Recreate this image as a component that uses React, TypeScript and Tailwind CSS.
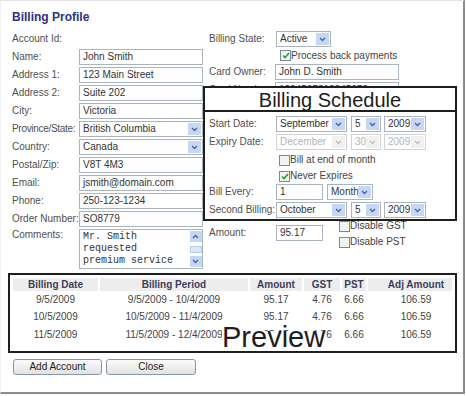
import React from "react";

const LBL = "text-[10px] leading-[12px] text-[#505050] whitespace-nowrap";

function Chevron({ up, disabled }: { up?: boolean; disabled?: boolean }) {
  return (
    <svg width="7" height="5" viewBox="0 0 7 5">
      <path
        d={up ? "M1 4 L3.5 1.5 L6 4" : "M1 1 L3.5 3.5 L6 1"}
        stroke={disabled ? "#bdbdbd" : "#4a64a0"}
        strokeWidth="1.4"
        fill="none"
      />
    </svg>
  );
}

function TextBox({ value, className }: { value: string; className: string }) {
  return (
    <div
      className={`flex h-[16px] items-center border border-[#aab4be] bg-white pl-[3px] text-[10px] leading-[12px] text-[#333] whitespace-nowrap overflow-hidden ${className}`}
    >
      {value}
    </div>
  );
}

function Select({
  value,
  className,
  disabled,
}: {
  value: string;
  className: string;
  disabled?: boolean;
}) {
  return (
    <div
      className={`flex h-[16px] items-center border bg-white pl-[3px] pr-[1px] text-[10px] leading-[12px] ${
        disabled ? "border-[#cfd3d8] text-[#b4b4b4]" : "border-[#aab4be] text-[#333]"
      } ${className}`}
    >
      <span className="flex-1 whitespace-nowrap overflow-hidden">{value}</span>
      <span
        className={`flex h-[12px] w-[13px] items-center justify-center ${
          disabled ? "bg-[#f1f1f1]" : "bg-[#c6d6f6]"
        }`}
      >
        <Chevron disabled={disabled} />
      </span>
    </div>
  );
}

function Check({ checked }: { checked?: boolean }) {
  return (
    <span className="flex h-[11px] w-[11px] shrink-0 items-center justify-center border border-[#7b8a99] bg-[#f1f3f5]">
      {checked && (
        <svg width="8" height="7" viewBox="0 0 8 7">
          <path d="M1 3.5 L3 5.5 L7 1" stroke="#21a121" strokeWidth="1.6" fill="none" />
        </svg>
      )}
    </span>
  );
}

function CheckRow({ label, checked }: { label: string; checked?: boolean }) {
  return (
    <div className="flex items-center">
      <Check checked={checked} />
      <span className="text-[10px] leading-[12px] text-[#444]">{label}</span>
    </div>
  );
}

function LeftRow({
  label,
  children,
  tight,
}: {
  label: string;
  children?: React.ReactNode;
  tight?: boolean;
}) {
  return (
    <div className="flex h-[16px] items-center">
      <span className={`${LBL} w-[67px] ${tight ? "tracking-[-0.3px]" : ""}`}>{label}</span>
      {children}
    </div>
  );
}

function RightRow({ label, children }: { label: string; children?: React.ReactNode }) {
  return (
    <div className="flex h-[16px] items-center">
      <span className={`${LBL} w-[67px]`}>{label}</span>
      {children}
    </div>
  );
}

const rows = [
  ["9/5/2009", "9/5/2009 - 10/4/2009", "95.17", "4.76", "6.66", "106.59"],
  ["10/5/2009", "10/5/2009 - 11/4/2009", "95.17", "4.76", "6.66", "106.59"],
  ["11/5/2009", "11/5/2009 - 12/4/2009", "95.17", "4.76", "6.66", "106.59"],
];

export default function App() {
  return (
    <div className="h-[396px] w-[466px] bg-white font-['Liberation_Sans',Arial,sans-serif]">
      <div className="flex h-[394px] w-[465px] flex-col border-t border-l border-r-2 border-b-2 border-t-[#e2e2e2] border-l-[#f0f0f0] border-r-[#8c8c8c] border-b-[#8c8c8c] pl-[11px] pt-[9px]">
        <div className="text-[12px] font-bold leading-[14px] text-[#2d3184]">Billing Profile</div>

        <div className="mt-[7px] flex">
          {/* Left column */}
          <div className="flex w-[191px] flex-col gap-[2px]">
            <LeftRow label="Account Id:" />
            <LeftRow label="Name:">
              <TextBox value="John Smith" className="w-[124px]" />
            </LeftRow>
            <LeftRow label="Address 1:">
              <TextBox value="123 Main Street" className="w-[124px]" />
            </LeftRow>
            <LeftRow label="Address 2:">
              <TextBox value="Suite 202" className="w-[124px]" />
            </LeftRow>
            <LeftRow label="City:">
              <TextBox value="Victoria" className="w-[124px]" />
            </LeftRow>
            <LeftRow label="Province/State:" tight>
              <Select value="British Columbia" className="w-[124px]" />
            </LeftRow>
            <LeftRow label="Country:">
              <Select value="Canada" className="w-[124px]" />
            </LeftRow>
            <LeftRow label="Postal/Zip:">
              <TextBox value="V8T 4M3" className="w-[124px]" />
            </LeftRow>
            <LeftRow label="Email:">
              <TextBox value="jsmith@domain.com" className="w-[124px]" />
            </LeftRow>
            <LeftRow label="Phone:">
              <TextBox value="250-123-1234" className="w-[124px]" />
            </LeftRow>
            <LeftRow label="Order Number:">
              <TextBox value="SO8779" className="w-[124px]" />
            </LeftRow>
            <div className="flex items-start">
              <span className={`${LBL} w-[67px]`}>Comments:</span>
              <div className="flex h-[40px] w-[124px] border border-[#aab4be] bg-white">
                <div className="flex-1 pl-[3px] pt-[1px] font-['Liberation_Mono','Courier_New',monospace] text-[10px] leading-[12px] text-[#333]">
                  <div>Mr. Smith</div>
                  <div>requested</div>
                  <div>premium service</div>
                </div>
                <div className="flex w-[13px] flex-col items-center justify-between py-[1px]">
                  <span className="flex h-[11px] w-[12px] items-center justify-center bg-[#c6d6f6]">
                    <Chevron up />
                  </span>
                  <span className="h-[7px] w-[12px] border border-[#b7c9ee] bg-[#dce7fb]" />
                  <span className="flex h-[11px] w-[12px] items-center justify-center bg-[#c6d6f6]">
                    <Chevron />
                  </span>
                </div>
              </div>
            </div>
          </div>

          {/* Right column */}
          <div className="flex w-[254px] flex-col">
            <div className="flex flex-col gap-[2px] pl-[6px]">
              <RightRow label="Billing State:">
                <Select value="Active" className="w-[55px]" />
              </RightRow>
              <div className="flex h-[13px] items-center pl-[71px]">
                <CheckRow label="Process back payments" checked />
              </div>
              <RightRow label="Card Owner:">
                <TextBox value="John D. Smith" className="-ml-[1px] w-[124px]" />
              </RightRow>
              <RightRow label="Card Number:">
                <TextBox value="1234567812345678" className="-ml-[1px] w-[124px]" />
              </RightRow>
            </div>

            {/* Billing schedule */}
            <div className="relative z-10 -mt-[12px] bg-white">
              <div className="flex h-[26px] items-center justify-center border-2 border-[#1e1e1e] pt-[1px] text-[20px] leading-[22px] text-[#1e1e1e]">
                Billing Schedule
              </div>
              <div className="flex flex-col border-x-2 border-b-2 border-[#1e1e1e] pb-[1px] pl-[4px] pt-[4px]">
                <RightRow label="Start Date:">
                  <Select value="September" className="w-[71px]" />
                  <Select value="5" className="ml-[4px] w-[30px]" />
                  <Select value="2009" className="ml-[3px] w-[42px]" />
                </RightRow>
                <div className="mt-[2px]">
                  <RightRow label="Expiry Date:">
                    <Select value="December" className="w-[71px]" disabled />
                    <Select value="30" className="ml-[4px] w-[30px]" disabled />
                    <Select value="2009" className="ml-[3px] w-[42px]" disabled />
                  </RightRow>
                </div>
                <div className="mt-[2px] flex h-[16px] items-center pl-[70px]">
                  <CheckRow label="Bill at end of month" />
                </div>
                <div className="flex h-[16px] items-center pl-[70px]">
                  <CheckRow label="Never Expires" checked />
                </div>
                <RightRow label="Bill Every:">
                  <TextBox value="1" className="w-[47px]" />
                  <Select value="Month" className="ml-[4px] w-[46px]" />
                </RightRow>
                <div className="mt-[2px]">
                  <RightRow label="Second Billing:">
                    <Select value="October" className="w-[71px]" />
                    <Select value="5" className="ml-[4px] w-[30px]" />
                    <Select value="2009" className="ml-[3px] w-[42px]" />
                  </RightRow>
                </div>
              </div>
            </div>

            <div className="flex items-start pl-[6px]">
              <div className="mt-[4px]">
                <RightRow label="Amount:">
                  <TextBox value="95.17" className="w-[47px]" />
                </RightRow>
              </div>
              <div className="relative z-20 -mt-[3px] ml-[16px] flex flex-col">
                <div className="flex h-[16px] items-center">
                  <CheckRow label="Disable GST" />
                </div>
                <div className="flex h-[16px] items-center">
                  <CheckRow label="Disable PST" />
                </div>
              </div>
            </div>
          </div>
        </div>

        {/* Preview table */}
        <div className="relative -ml-[4px] mt-[4px] h-[80px] w-[449px] border-2 border-[#1e1e1e] px-[3px] pt-[3px]">
          <div className="grid grid-cols-[85px_148px_52px_36px_24px_84px] grid-rows-[13px_17px_18px_17px] gap-x-[2px] text-[10px] leading-[12px]">
            {["Billing Date", "Billing Period", "Amount", "GST", "PST", "Adj Amount"].map((h, i) => (
              <div
                key={h}
                className={`flex items-center justify-center whitespace-nowrap bg-[#ededed] font-bold text-[#3d3d5c] ${
                  i === 5 ? "pl-[12px]" : ""
                }`}
              >
                {h}
              </div>
            ))}
            {rows.map((r, ri) =>
              r.map((c, ci) => (
                <div
                  key={`${ri}-${ci}`}
                  className={`flex items-center justify-center whitespace-nowrap text-[#444] ${
                    ci === 5 ? "pl-[12px]" : ""
                  }`}
                >
                  {c}
                </div>
              ))
            )}
          </div>
          <div className="absolute left-[212px] top-[56px] bg-white text-[29px] leading-[12px] text-[#1e1e1e]">
            Preview
          </div>
        </div>

        <div className="mt-[6px] ml-[1px] flex gap-[4px]">
          <button className="flex h-[16px] w-[89px] items-center justify-center rounded-[3px] border border-[#8397ab] bg-linear-to-b from-[#fbfbfb] to-[#e2e2e2] text-[10px] leading-[12px] text-[#222]">
            Add Account
          </button>
          <button className="flex h-[16px] w-[90px] items-center justify-center rounded-[3px] border border-[#8397ab] bg-linear-to-b from-[#fbfbfb] to-[#e2e2e2] text-[10px] leading-[12px] text-[#222]">
            Close
          </button>
        </div>
      </div>
    </div>
  );
}
